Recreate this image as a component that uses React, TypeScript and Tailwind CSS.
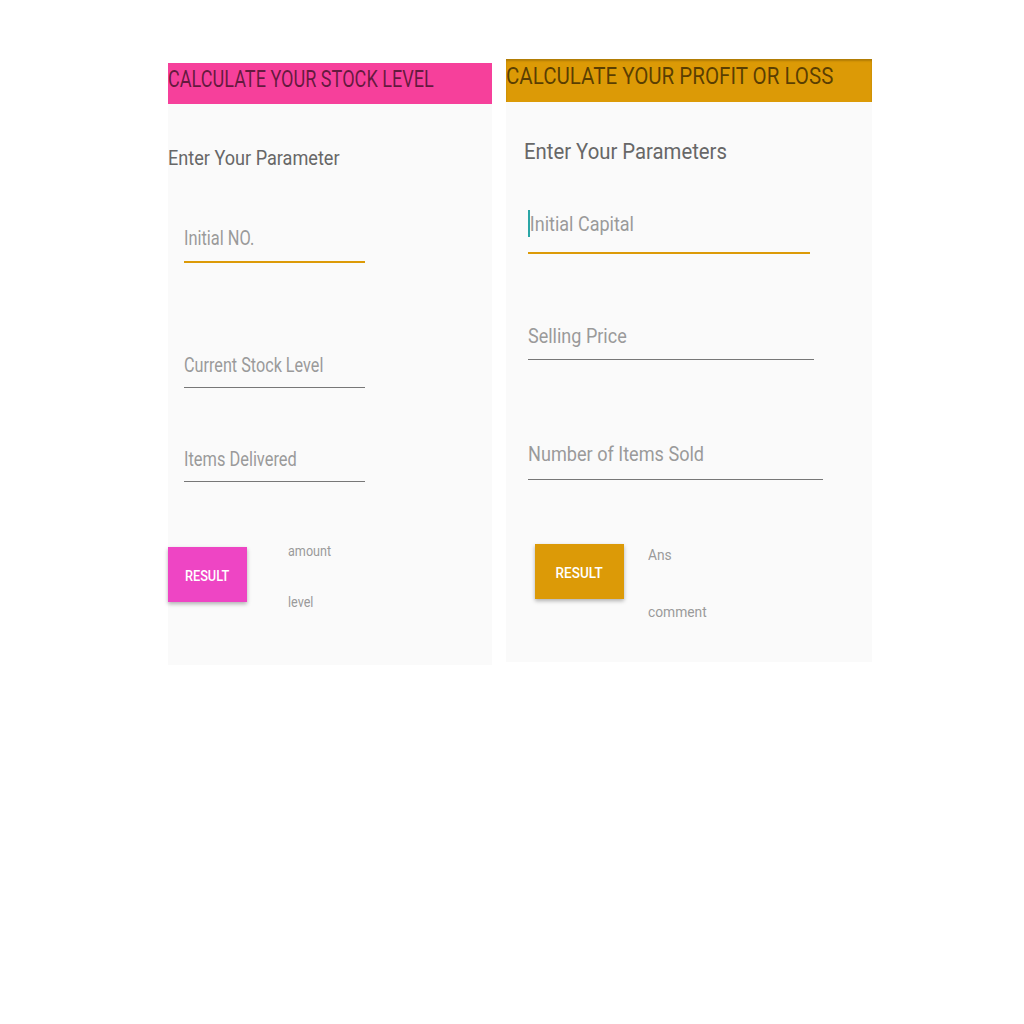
import React from "react";

type FieldProps = {
  label: string;
  width: string;
  gap: string;
  focused?: boolean;
  cursor?: boolean;
  scale: string;
  top: string;
};

function Field({ label, width, gap, focused, cursor, scale, top }: FieldProps): JSX.Element {
  return (
    <div className={`${top} ${width}`}>
      <div className="relative h-6 text-[20px] leading-6 text-[#9a9a9a]">
        {cursor && <span className="absolute left-0 top-[-2px] h-[27px] w-[1.5px] bg-[#2aa6a6]"></span>}
        <span className={`inline-block whitespace-nowrap origin-left ${scale} ${cursor ? "pl-[2px]" : ""}`}>{label}</span>
      </div>
      <div
        className={`${gap} ${focused ? "h-[2px] bg-[#dc9a07]" : "h-px bg-[#777777]"}`}
      ></div>
    </div>
  );
}

function StockPanel(): JSX.Element {
  return (
    <div className="mt-[4px] w-[324px] h-[602px] bg-[#fafafa]">
      <div className="h-[41px] bg-[#f6409b] pt-px">
        <span className="inline-block whitespace-nowrap origin-left scale-x-[0.754] text-[24px] leading-[30px] text-black/60">
          CALCULATE YOUR STOCK LEVEL
        </span>
      </div>
      <div className="mt-[42px] h-6 text-[21px] leading-6 text-[#676767]">
        <span className="inline-block whitespace-nowrap origin-left scale-x-[0.862]">Enter Your Parameter</span>
      </div>
      <div className="pl-[16px]">
        <Field label="Initial NO." width="w-[181px]" gap="mt-[11px]" focused scale="scale-x-[0.82]" top="mt-[56px]" />
        <Field label="Current Stock Level" width="w-[181px]" gap="mt-[10px]" scale="scale-x-[0.81]" top="mt-[90px]" />
        <Field label="Items Delivered" width="w-[181px]" gap="mt-[10px]" scale="scale-x-[0.82]" top="mt-[59px]" />
      </div>
      <div className="mt-[65px] flex items-start">
        <button className="w-[79px] h-[55px] pt-[3px] bg-[#ee45c4] text-white text-[15px] font-medium shadow-[0_2px_4px_rgba(0,0,0,0.3)]">
          <span className="inline-block scale-x-[0.85]">RESULT</span>
        </button>
        <div className="ml-[41px] -mt-[6px] text-[15px] leading-5 text-[#9a9a9a]">
          <div className="h-5"><span className="inline-block origin-left scale-x-[0.84]">amount</span></div>
          <div className="mt-[31px] h-5"><span className="inline-block origin-left scale-x-[0.84]">level</span></div>
        </div>
      </div>
    </div>
  );
}

function ProfitPanel(): JSX.Element {
  return (
    <div className="w-[366px] h-[603px] bg-[#fafafa]">
      <div className="h-[43px] bg-[#dc9a06] pt-[2px] shadow-[inset_0_2px_2px_rgba(0,0,0,0.2)]">
        <span className="inline-block whitespace-nowrap origin-left scale-x-[0.855] text-[24px] leading-[30px] text-black/60">
          CALCULATE YOUR PROFIT OR LOSS
        </span>
      </div>
      <div className="mt-[36px] pl-[18px] h-7 text-[22px] leading-7 text-[#676767]">
        <span className="inline-block whitespace-nowrap origin-left scale-x-[0.923]">Enter Your Parameters</span>
      </div>
      <div className="pl-[22px]">
        <Field label="Initial Capital" width="w-[282px]" gap="mt-[16px]" focused cursor scale="scale-x-[0.9]" top="mt-[46px]" />
        <Field label="Selling Price" width="w-[286px]" gap="mt-[11px]" scale="scale-x-[0.9]" top="mt-[70px]" />
        <Field label="Number of Items Sold" width="w-[295px]" gap="mt-[13px]" scale="scale-x-[0.905]" top="mt-[82px]" />
      </div>
      <div className="mt-[64px] pl-[29px] flex items-start">
        <button className="w-[89px] h-[55px] pt-[3px] bg-[#dc9a07] text-white text-[15px] font-medium shadow-[0_2px_4px_rgba(0,0,0,0.3)]">
          <span className="inline-block scale-x-[0.9]">RESULT</span>
        </button>
        <div className="ml-[24px] mt-[1px] text-[15px] leading-5 text-[#9a9a9a]">
          <div className="h-5"><span className="inline-block origin-left scale-x-[0.92]">Ans</span></div>
          <div className="mt-[37px] h-5"><span className="inline-block origin-left scale-x-[0.92]">comment</span></div>
        </div>
      </div>
    </div>
  );
}

export default function App(): JSX.Element {
  return (
    <div className="w-[1024px] h-[1024px] bg-white font-['Roboto',sans-serif]">
      <div className="pt-[59px] pl-[168px] flex items-start gap-[14px]">
        <StockPanel />
        <ProfitPanel />
      </div>
    </div>
  );
}
